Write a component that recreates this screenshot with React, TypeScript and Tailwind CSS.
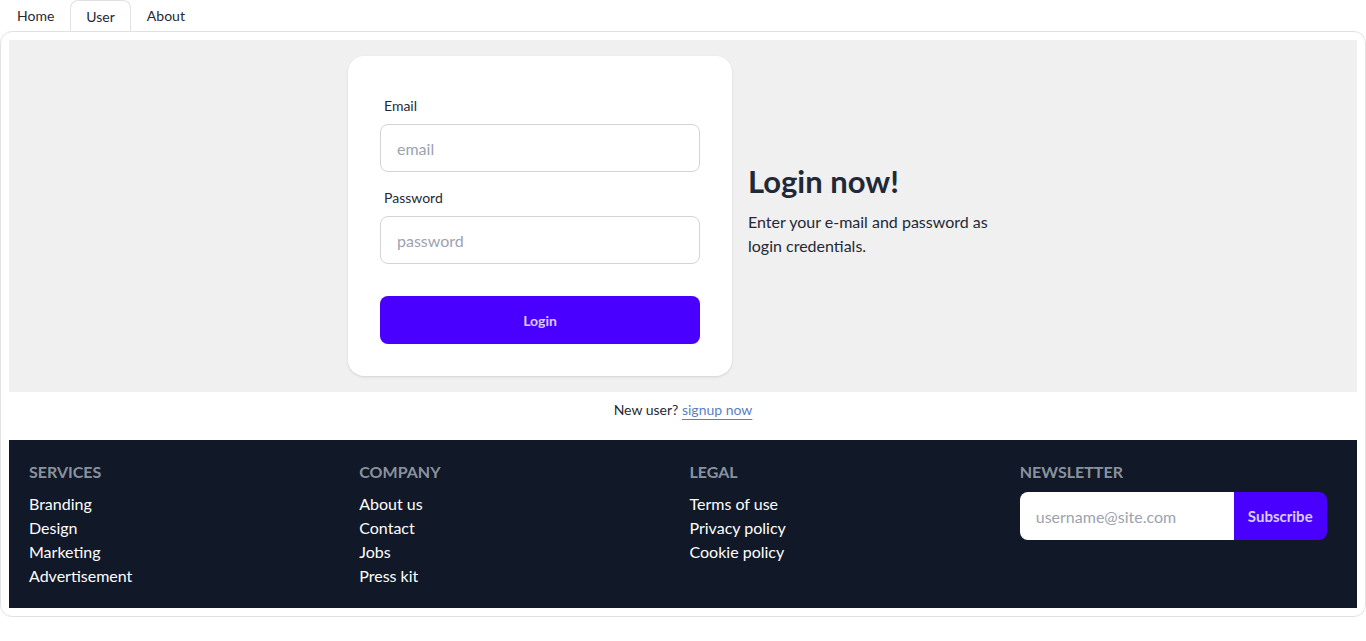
import { useState } from 'react';

const tabs = ['Home', 'User', 'About'];

const footerCols = [
	{ title: 'Services', links: ['Branding', 'Design', 'Marketing', 'Advertisement'] },
	{ title: 'Company', links: ['About us', 'Contact', 'Jobs', 'Press kit'] },
	{ title: 'Legal', links: ['Terms of use', 'Privacy policy', 'Cookie policy'] },
];

const App = () => {
	const [active, setActive] = useState('User');

	return (
		<div className="min-h-screen bg-white text-[#1f2937] font-['Lato','Noto_Sans',sans-serif]">
			<div className="flex px-px">
				{tabs.map((tab) => (
					<button
						key={tab}
						onClick={() => setActive(tab)}
						className={
							tab === active
								? 'relative z-10 -mb-px h-[31px] px-[15px] text-[14px] rounded-t-lg border border-b-0 border-[#e2e2e2] bg-white'
								: 'h-[31px] px-[15px] text-[14px] border border-transparent'
						}
					>
						{tab}
					</button>
				))}
			</div>

			<div className="border border-[#e2e2e2] rounded-xl p-2">
				<div className="bg-[#f0f0f0] flex justify-center items-center gap-4 py-4">
					<div className="w-[384px] bg-white rounded-2xl shadow-sm p-8 pt-10">
						<form className="flex flex-col" onSubmit={(e) => e.preventDefault()}>
							<label className="px-1 text-[14px] leading-5 mb-[8px]">Email</label>
							<input
								placeholder="email"
								className="h-12 px-4 rounded-lg border border-[#d4d4d8] text-[16px] outline-none placeholder:text-[#9ca3af]"
							/>
							<label className="px-1 text-[14px] leading-5 mt-[16px] mb-[8px]">Password</label>
							<input
								type="password"
								placeholder="password"
								className="h-12 px-4 rounded-lg border border-[#d4d4d8] text-[16px] outline-none placeholder:text-[#9ca3af]"
							/>
							<button className="mt-8 h-12 rounded-lg bg-[#4a00ff] text-[#d9ccff] text-[14px] font-bold">
								Login
							</button>
						</form>
					</div>
					<div className="w-[270px] -mt-[14px]">
						<h1 className="text-[31px] font-bold leading-[40px]">Login now!</h1>
						<p className="mt-[9px] text-[16px] leading-6">
							Enter your e-mail and password as login credentials.
						</p>
					</div>
				</div>

				<div className="h-12 flex items-center justify-center text-[14px] pb-[13px]">
					<span>New user?&nbsp;</span>
					<a href="#" className="text-[#5b7fc0] underline underline-offset-4 decoration-[#5b7fc0]">
						signup now
					</a>
				</div>

				<footer className="bg-[#111827] grid grid-cols-4 gap-x-[13px] px-5 pt-5 pb-5">
					{footerCols.map((col) => (
						<nav key={col.title} className="flex flex-col">
							<h6 className="uppercase font-bold text-[16px] leading-6 text-[#9ca3af]/90 mb-2">
								{col.title}
							</h6>
							{col.links.map((link) => (
								<a key={link} href="#" className="text-white text-[16px] leading-6">
									{link}
								</a>
							))}
						</nav>
					))}
					<div className="flex flex-col">
						<h6 className="uppercase font-bold text-[16px] leading-6 text-[#9ca3af]/90 mb-2">
							Newsletter
						</h6>
						<div className="flex">
							<input
								placeholder="username@site.com"
								className="w-[214px] h-12 px-4 bg-white rounded-l-lg text-[16px] outline-none placeholder:text-[#9ca3af]"
							/>
							<button className="w-[93px] h-12 rounded-r-lg bg-[#4a00ff] text-[#d9ccff] text-[15px] font-bold">
								Subscribe
							</button>
						</div>
					</div>
				</footer>
			</div>
		</div>
	);
};

export default App;
